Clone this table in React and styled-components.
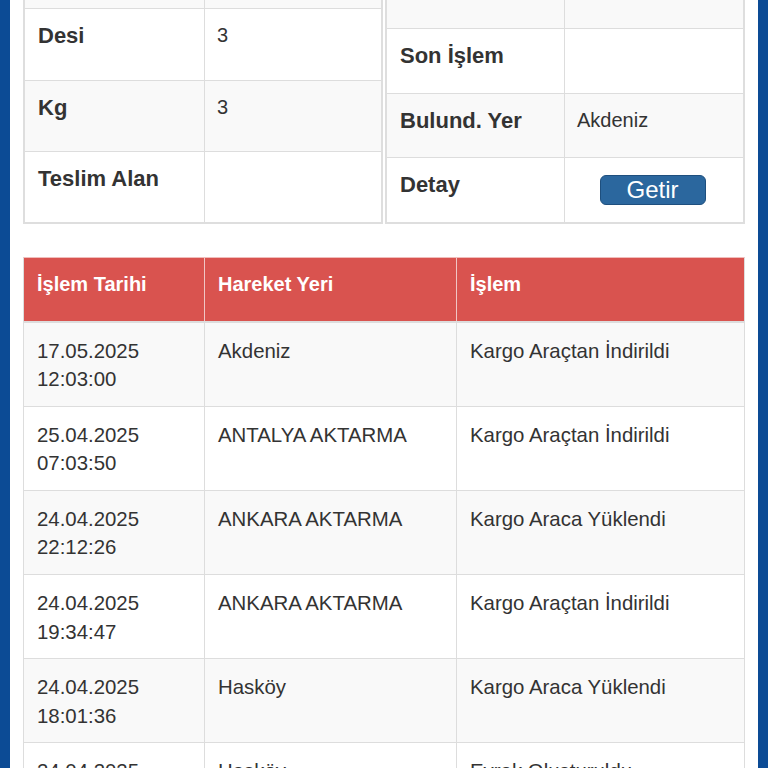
import React from "react";
import styled, { createGlobalStyle } from "styled-components";

const Global = createGlobalStyle`
  html, body {
    margin: 0;
    padding: 0;
    height: 100%;
    overflow: hidden;
    background: #0c4b95;
  }
  body {
    font-family: "Liberation Sans", Arial, Helvetica, sans-serif;
    color: #333;
  }
`;

const Page = styled.div`
  margin: 0 10px;
  background: #fff;
  padding: 0 13px;
  min-height: 100vh;
  display: flex;
  flex-direction: column;
`;

const InfoSection = styled.div`
  display: flex;
  align-items: flex-end;
  gap: 2px;
  margin-top: -65px;
`;

const InfoTable = styled.div`
  flex: 1;
  border: 2px solid #dedede;
  background: #fff;
`;

const InfoRow = styled.div`
  display: grid;
  grid-template-columns: ${(p) => p.$cols};
  box-sizing: border-box;
  height: ${(p) => p.$h}px;
  background: ${(p) => (p.$striped ? "#f9f9f9" : "#fff")};
  & + & {
    border-top: 1px solid #ddd;
  }
`;

const Label = styled.div`
  padding: 11px 12px 0 13px;
  font-size: 22px;
  font-weight: 700;
  line-height: 1.42857;
  border-right: 1px solid #ddd;
  overflow: hidden;
`;

const Value = styled.div`
  padding: 12px 12px 0 12px;
  font-size: 20px;
  line-height: 1.42857;
  overflow: hidden;
  ${(p) =>
    p.$center &&
    `
    display: flex;
    align-items: center;
    justify-content: center;
    padding: 0;
  `}
`;

const Button = styled.button`
  width: 106px;
  height: 30px;
  box-sizing: border-box;
  background: #2b679e;
  border: 1px solid #1e4f7e;
  border-radius: 6px;
  color: #fff;
  font-family: "Liberation Sans", Arial, sans-serif;
  font-size: 24px;
  line-height: 1;
  padding: 0 0 1px;
  margin-left: -3px;
`;

const HistoryTable = styled.div`
  margin-top: 33px;
  border: 1px solid #ddd;
  border-top-color: #f1bdbb;
`;

const HeadRow = styled.div`
  display: grid;
  grid-template-columns: 25fr 35fr 40fr;
  background: #d9534f;
  border-bottom: 2px solid #ddd;
`;

const HeadCell = styled.div`
  padding: 12px 13px 22px;
  color: #fff;
  font-size: 20px;
  font-weight: 700;
  line-height: 28.57px;
  & + & {
    border-left: 1px solid #f0c6c5;
  }
`;

const BodyRow = styled.div`
  display: grid;
  grid-template-columns: 25fr 35fr 40fr;
  background: ${(p) => (p.$striped ? "#f9f9f9" : "#fff")};
  border-bottom: 1px solid #ddd;
`;

const BodyCell = styled.div`
  padding: 14px 13px 12px;
  font-size: 20.4px;
  line-height: 28.57px;
  min-height: 57.14px;
  & + & {
    border-left: 1px solid #ddd;
  }
`;

const leftRows = [
  { h: 71, label: "", value: "" },
  { h: 72, label: "Desi", value: "3" },
  { h: 71, label: "Kg", value: "3" },
  { h: 71, label: "Teslim Alan", value: "" },
];

const rightRows = [
  { h: 65, label: "", value: "Şubede" },
  { h: 65, label: "Son İşlem", value: "" },
  { h: 64, label: "Bulund. Yer", value: "Akdeniz" },
  { h: 65, label: "Detay", button: "Getir" },
];

const history = [
  ["17.05.2025", "12:03:00", "Akdeniz", "Kargo Araçtan İndirildi"],
  ["25.04.2025", "07:03:50", "ANTALYA AKTARMA", "Kargo Araçtan İndirildi"],
  ["24.04.2025", "22:12:26", "ANKARA AKTARMA", "Kargo Araca Yüklendi"],
  ["24.04.2025", "19:34:47", "ANKARA AKTARMA", "Kargo Araçtan İndirildi"],
  ["24.04.2025", "18:01:36", "Hasköy", "Kargo Araca Yüklendi"],
  ["24.04.2025", "17:42:10", "Hasköy", "Evrak Oluşturuldu"],
];

function KeyValueTable({ rows, cols }) {
  return (
    <InfoTable>
      {rows.map((r, i) => (
        <InfoRow key={i} $h={r.h} $cols={cols} $striped={i % 2 === 0}>
          <Label>{r.label}</Label>
          {r.button ? (
            <Value $center>
              <Button>{r.button}</Button>
            </Value>
          ) : (
            <Value>{r.value}</Value>
          )}
        </InfoRow>
      ))}
    </InfoTable>
  );
}

export default function App() {
  return (
    <>
      <Global />
      <Page>
        <InfoSection>
          <KeyValueTable rows={leftRows} cols="180fr 176fr" />
          <KeyValueTable rows={rightRows} cols="178fr 178fr" />
        </InfoSection>
        <HistoryTable>
          <HeadRow>
            <HeadCell>İşlem Tarihi</HeadCell>
            <HeadCell>Hareket Yeri</HeadCell>
            <HeadCell>İşlem</HeadCell>
          </HeadRow>
          {history.map((h, i) => (
            <BodyRow key={i} $striped={i % 2 === 0}>
              <BodyCell>
                {h[0]}
                <br />
                {h[1]}
              </BodyCell>
              <BodyCell>{h[2]}</BodyCell>
              <BodyCell>{h[3]}</BodyCell>
            </BodyRow>
          ))}
        </HistoryTable>
      </Page>
    </>
  );
}
